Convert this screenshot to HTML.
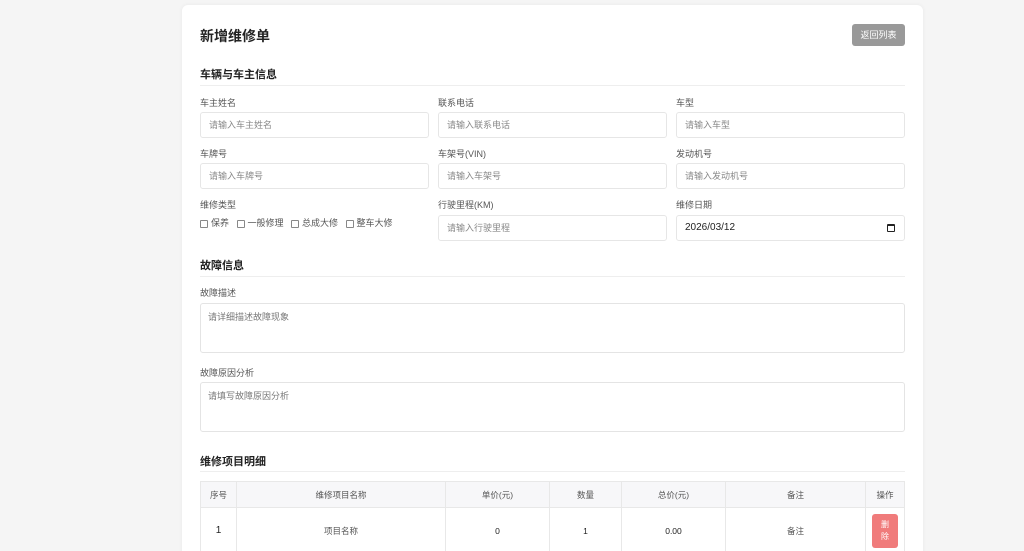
<!DOCTYPE html>
<html><head><meta charset="utf-8"><style>
*{box-sizing:border-box;margin:0;padding:0}
html,body{width:1024px;height:551px;overflow:hidden}
body{background:#f5f5f5;font-family:"Liberation Sans","Noto Sans CJK SC",sans-serif;color:#333;position:relative}
.card{position:absolute;left:182px;top:5px;width:741px;height:560px;background:#fff;border-radius:6px;box-shadow:0 0 4px rgba(0,0,0,.06)}
h1{position:absolute;left:200px;top:26px;font-size:14px;font-weight:bold;color:#222}
.btn{position:absolute;left:852px;top:24px;width:53px;height:22px;background:#999;border-radius:3px;color:#fff;font-size:9px;text-align:center;line-height:22px}
.sec{position:absolute;left:200px;font-size:11px;font-weight:bold;color:#222}
.line{position:absolute;left:200px;width:705px;height:1px;background:#eee}
.lb{position:absolute;font-size:9px;color:#555}
.in{position:absolute;width:229px;height:26px;border:1px solid #e6e6e6;border-radius:3px;font-size:9px;color:#888;padding-left:8px;line-height:24px}
.ta{position:absolute;left:200px;width:705px;height:50px;border:1px solid #e4e4e4;border-radius:3px;font-size:9px;color:#777;padding:6px 7px}
.cb{display:inline-block;width:8px;height:8px;border:1px solid #888;border-radius:1px;vertical-align:middle;margin-right:3px}
table{position:absolute;left:200px;top:481px;width:705px;border-collapse:collapse;font-size:8.5px;color:#555}
td,th{border:1px solid #e8e8e8;text-align:center;font-weight:normal}
th{background:#f7f7f9;height:26px}
td{height:46px}
</style></head><body>
<div class="card"></div>
<h1>新增维修单</h1>
<div class="btn">返回列表</div>
<div class="sec" style="top:66px">车辆与车主信息</div>
<div class="line" style="top:85px"></div>
<div class="lb" style="left:200px;top:96px">车主姓名</div>
<div class="lb" style="left:438px;top:96px">联系电话</div>
<div class="lb" style="left:676px;top:96px">车型</div>
<div class="in" style="left:200px;top:112px">请输入车主姓名</div>
<div class="in" style="left:438px;top:112px">请输入联系电话</div>
<div class="in" style="left:676px;top:112px">请输入车型</div>
<div class="lb" style="left:200px;top:147px">车牌号</div>
<div class="lb" style="left:438px;top:147px">车架号(VIN)</div>
<div class="lb" style="left:676px;top:147px">发动机号</div>
<div class="in" style="left:200px;top:163px">请输入车牌号</div>
<div class="in" style="left:438px;top:163px">请输入车架号</div>
<div class="in" style="left:676px;top:163px">请输入发动机号</div>
<div class="lb" style="left:200px;top:198px">维修类型</div>
<div class="lb" style="left:438px;top:198px">行驶里程(KM)</div>
<div class="lb" style="left:676px;top:198px">维修日期</div>
<div class="lb" style="left:200px;top:216px"><span class="cb"></span>保养 &nbsp;&nbsp;<span class="cb"></span>一般修理 &nbsp;&nbsp;<span class="cb"></span>总成大修 &nbsp;&nbsp;<span class="cb"></span>整车大修</div>
<div class="in" style="left:438px;top:215px">请输入行驶里程</div>
<div class="in" style="left:676px;top:215px;color:#222;font-size:10px">2026/03/12<span style="position:absolute;right:9px;top:8px;width:8px;height:8px;border:1.5px solid #222;border-top-width:2.5px;border-radius:1px"></span></div>
<div class="sec" style="top:257px">故障信息</div>
<div class="line" style="top:276px"></div>
<div class="lb" style="left:200px;top:286px">故障描述</div>
<div class="ta" style="top:303px">请详细描述故障现象</div>
<div class="lb" style="left:200px;top:366px">故障原因分析</div>
<div class="ta" style="top:382px">请填写故障原因分析</div>
<div class="sec" style="top:453px">维修项目明细</div>
<div class="line" style="top:471px"></div>
<table>
<tr><th style="width:36px">序号</th><th style="width:209px">维修项目名称</th><th style="width:104px">单价(元)</th><th style="width:72px">数量</th><th style="width:104px">总价(元)</th><th style="width:140px">备注</th><th>操作</th></tr>
<tr><td style="font-size:10px;color:#222">1</td><td>项目名称</td><td style="color:#222">0</td><td style="color:#222">1</td><td style="color:#222">0.00</td><td>备注</td><td><div style="margin:0 auto;width:26px;height:34px;background:#f07b7b;border-radius:3px;color:#fff;font-size:8px;line-height:12px;padding-top:5px">删<br>除</div></td></tr>
</table>
</body></html>
